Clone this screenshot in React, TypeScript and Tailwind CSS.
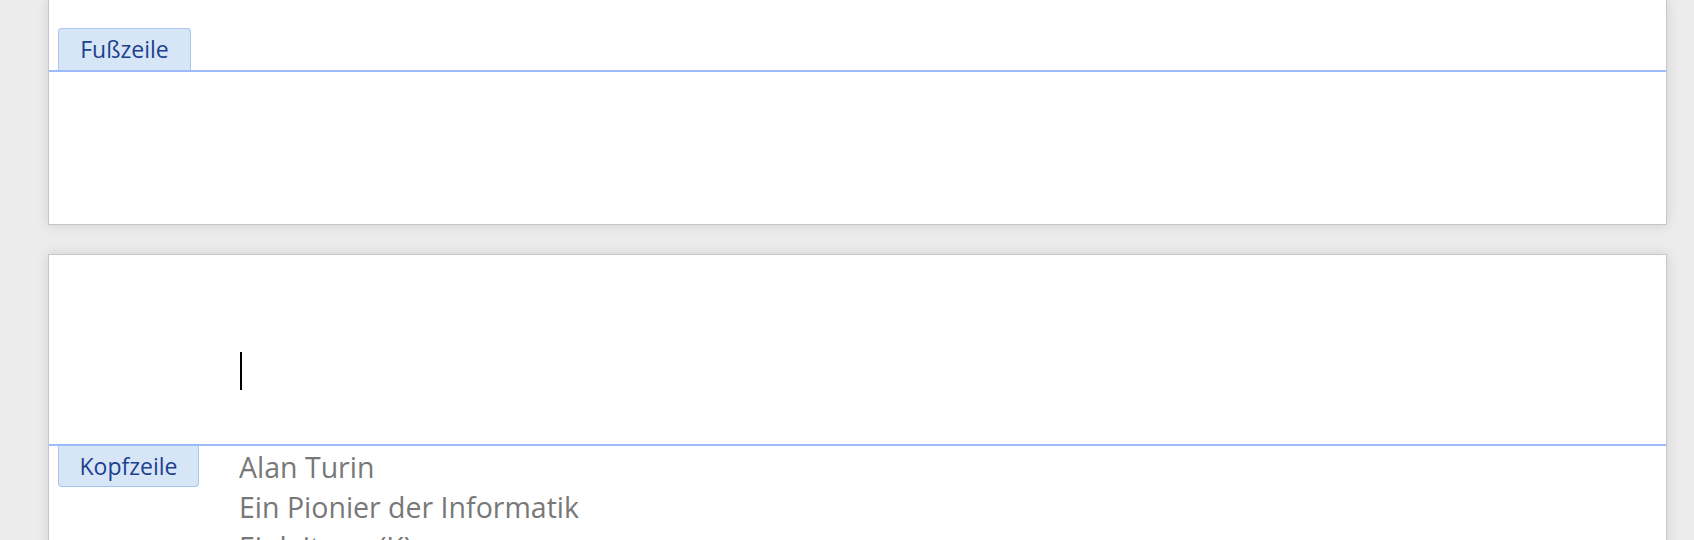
import React from 'react';

function Tab({ label, side }: { label: string; side: 'top' | 'bottom' }) {
  const shape =
    side === 'top'
      ? 'rounded-t-[4px] border-t border-x h-[42px]'
      : 'rounded-b-[4px] border-b border-x h-[41px]';
  return (
    <div
      className={`ml-[9px] flex items-center border-[#a8c5f4] bg-[#d7e6f6] text-[#1c418e] text-[23px] ${shape}`}
      style={{ width: side === 'top' ? 133 : 141 }}
    >
      <span className="w-full text-center leading-none">{label}</span>
    </div>
  );
}

export default function App() {
  return (
    <div
      className="w-[1694px] h-[540px] overflow-hidden bg-[#ececec]"
      style={{ fontFamily: '"Open Sans", Lato, sans-serif' }}
    >
      <div className="ml-[48px] w-[1619px] flex flex-col gap-[29px]">
        {/* Seite 1: Fußzeile */}
        <div className="h-[225px] bg-white border-x border-b border-[#c6c6c6] shadow-[0_0_12px_rgba(0,0,0,0.12)] flex flex-col">
          <div className="h-[28px]" />
          <Tab label="Fußzeile" side="top" />
          <div className="h-[2px] bg-[#9bbcf9]" />
        </div>

        {/* Seite 2: Kopfzeile */}
        <div className="h-[400px] bg-white border-x border-t border-[#c6c6c6] shadow-[0_0_12px_rgba(0,0,0,0.12)] flex flex-col">
          <div className="h-[189px] relative">
            <span className="absolute left-[191px] top-[97px] w-[2px] h-[38px] bg-black" />
          </div>
          <div className="h-[2px] bg-[#9bbcf9]" />
          <div className="flex">
            <Tab label="Kopfzeile" side="bottom" />
            <div className="ml-[40px] text-[#787878] text-[28.5px] leading-[40px] mt-[1px]">
              <div>Alan Turin</div>
              <div>Ein Pionier der Informatik</div>
              <div>Einleitung (K)</div>
            </div>
          </div>
        </div>
      </div>
    </div>
  );
}
